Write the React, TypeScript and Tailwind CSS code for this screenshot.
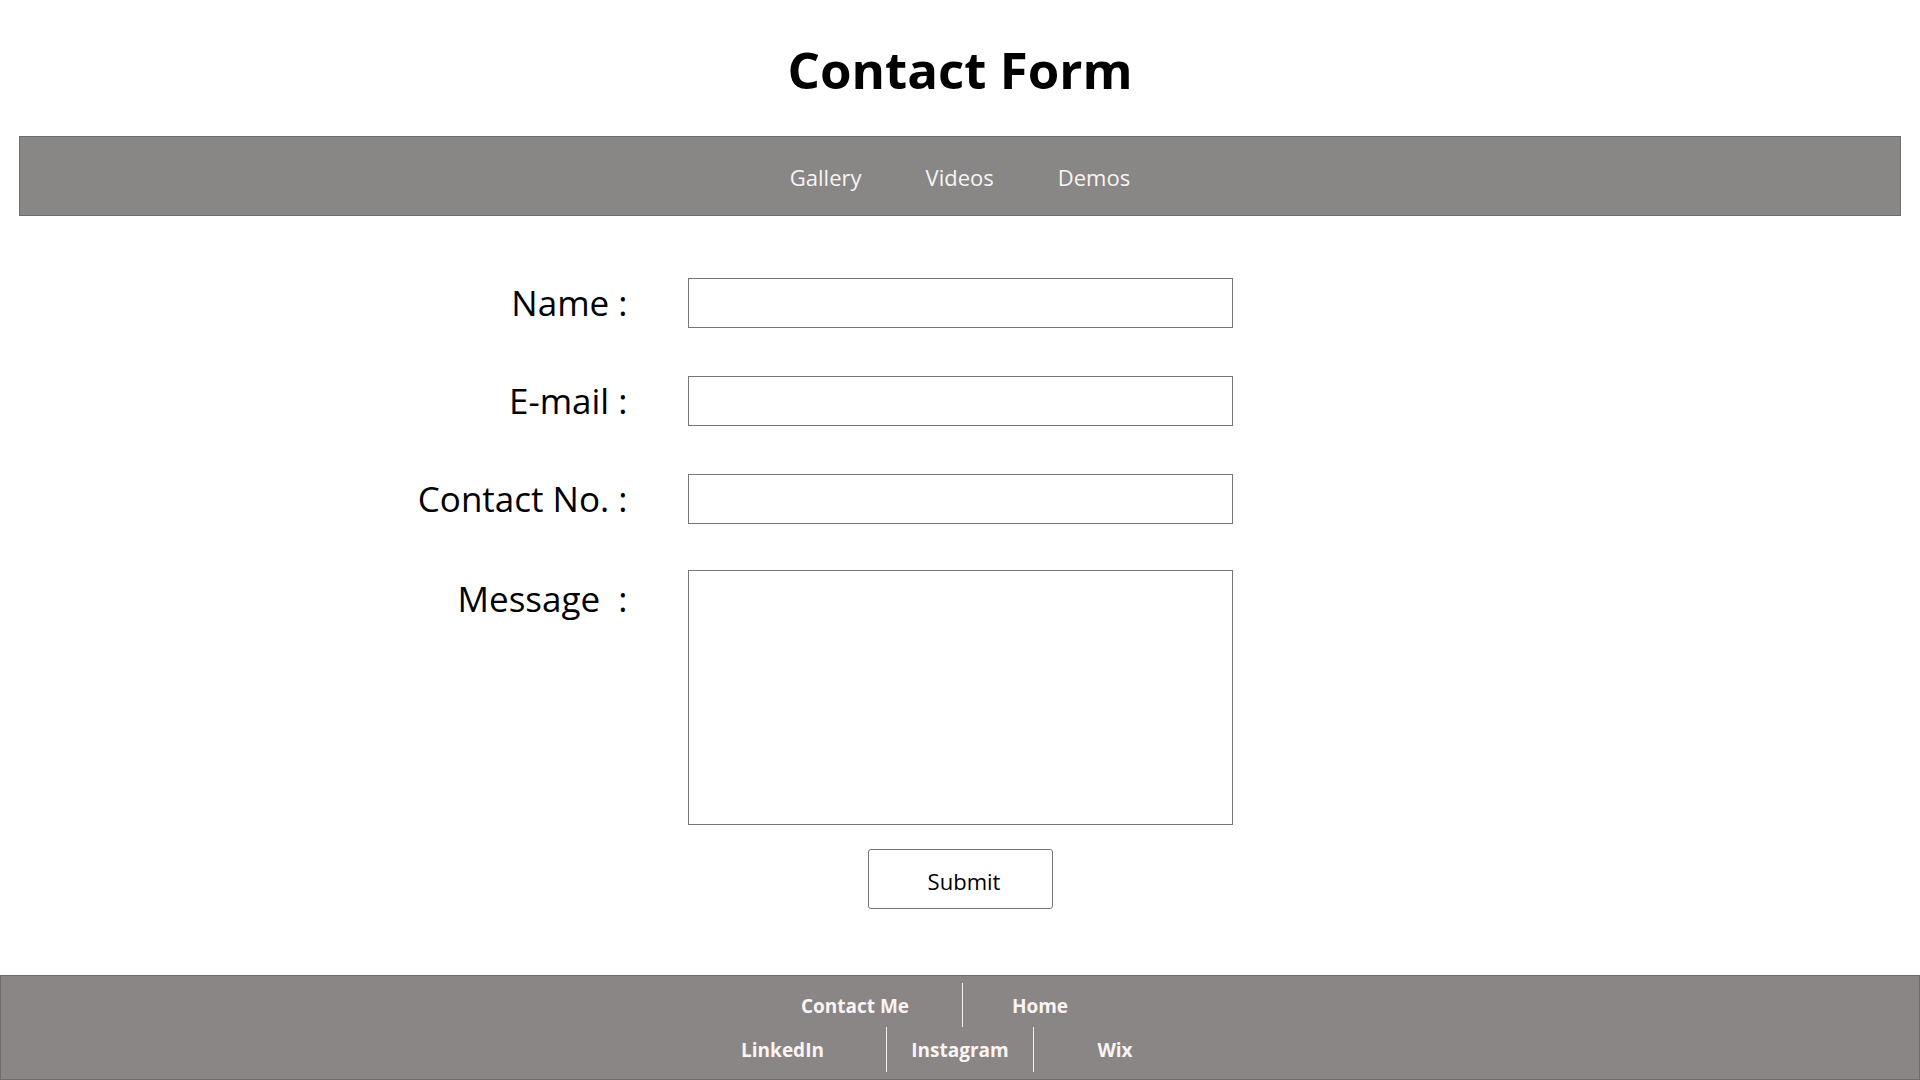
const font = { fontFamily: '"Open Sans", "Noto Sans", "Liberation Sans", sans-serif' };

const fields = [
  { label: 'Name :', type: 'text' },
  { label: 'E-mail :', type: 'email' },
  { label: 'Contact No. :', type: 'tel' },
];

export default function App() {
  return (
    <div className="min-h-screen bg-white text-black" style={font}>
      <header className="flex h-[136px] items-center justify-center pt-[3px]">
        <h1 className="text-[51px] font-bold leading-none">Contact Form</h1>
      </header>

      <nav className="mx-[19px] flex h-[80px] items-center justify-center gap-[64px] border border-[#6e6e6e] bg-[#898686] pt-[2px] text-[22px] text-[#f8f4f4]">
        <a href="#">Gallery</a>
        <a href="#">Videos</a>
        <a href="#">Demos</a>
      </nav>

      <form className="mt-[62px] grid grid-cols-[1fr_545px_1fr] gap-x-[60px]" onSubmit={(e) => e.preventDefault()}>
        {fields.map((f, i) => (
          <div key={f.label} className="contents">
            <label className={`flex h-[50px] items-center justify-end text-[35px] ${i > 0 ? 'mt-[48px]' : ''}`}>{f.label}</label>
            <input
              type={f.type}
              className={`h-[50px] w-full border border-[#767676] bg-white px-2 text-[20px] outline-none ${i > 0 ? 'mt-[48px]' : ''}`}
            />
            <div />
          </div>
        ))}

        <label className="mt-[46px] flex h-[58px] items-center justify-end self-start text-[35px]">Message&nbsp; :</label>
        <textarea className="mt-[46px] h-[255px] w-full resize-none border border-[#767676] bg-white p-2 text-[20px] outline-none" />
        <div />

        <div />
        <button
          type="submit"
          className="mt-[24px] h-[60px] w-[185px] justify-self-center rounded-[3px] border border-[#767676] bg-white pl-[8px] pt-[4px] text-[22px] text-black"
        >
          Submit
        </button>
        <div />
      </form>

      <footer className="mt-[66px] border border-[#6e6e6e] bg-[#8a8685] pb-[7px] pt-[7px] text-[19px] font-bold text-[#fbf4f4]">
        <div className="flex justify-center pr-[55px]">
          <a href="#" className="flex h-[44px] w-[215px] items-center justify-center border-r border-[#f4eeee] pt-[2px]">Contact Me</a>
          <a href="#" className="flex h-[44px] w-[154px] items-center justify-center pt-[2px]">Home</a>
        </div>
        <div className="flex justify-center pr-[45px]">
          <a href="#" className="flex h-[45px] w-[208px] items-center justify-center border-r border-[#f4eeee] pt-[1px]">LinkedIn</a>
          <a href="#" className="flex h-[45px] w-[147px] items-center justify-center border-r border-[#f4eeee] pt-[1px]">Instagram</a>
          <a href="#" className="flex h-[45px] w-[162px] items-center justify-center pt-[1px]">Wix</a>
        </div>
      </footer>
    </div>
  );
}
